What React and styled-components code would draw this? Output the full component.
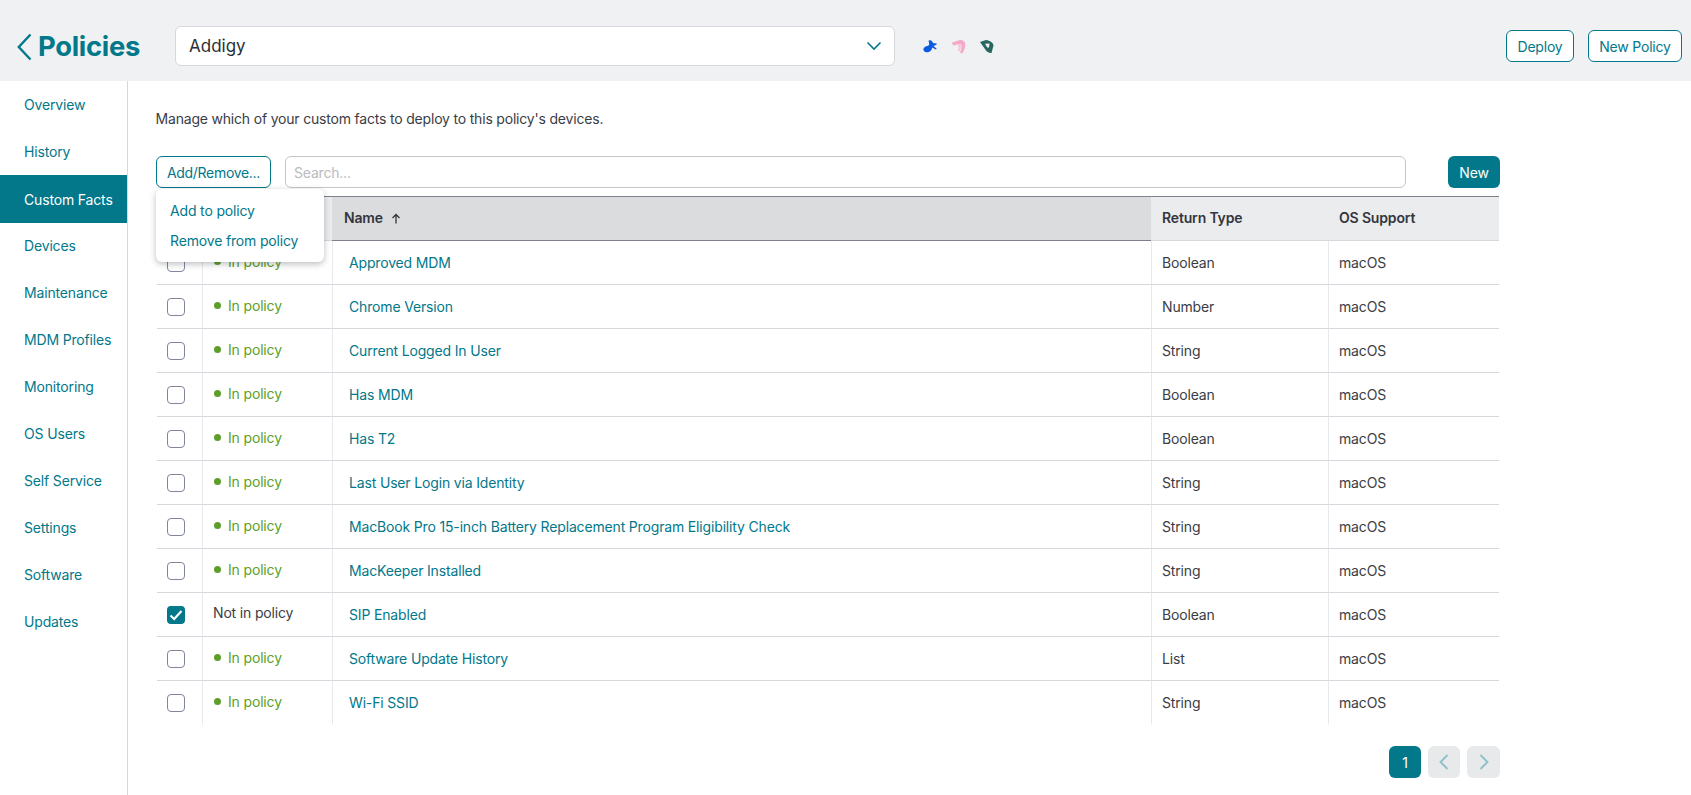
import React from "react";
import styled, { createGlobalStyle } from "styled-components";

const teal = "#02788a";

const Global = createGlobalStyle`
  html, body { margin: 0; padding: 0; background: #fff; }
  body { font-family: Inter, "Liberation Sans", sans-serif; font-size: 14px; letter-spacing: -0.16px; color: #3a3d45; overflow: hidden; }
  * { box-sizing: border-box; }
`;

const Page = styled.div`
  width: 1691px;
  height: 795px;
  position: relative;
  overflow: hidden;
`;

const Header = styled.header`
  height: 81px;
  background: #f0f1f3;
  display: flex;
  align-items: flex-start;
  position: relative;
`;

const BackLink = styled.a`
  position: absolute;
  left: 16px;
  top: 30px;
  display: flex;
  align-items: center;
  color: ${teal};
  font-size: 27.400px;
  line-height: 34px;
  font-weight: 700;
  letter-spacing: -0.3px;
`;

const Title = styled.span`
  position: relative;
  top: -1px;
  margin-left: 5px;
`;

const SelectBox = styled.div`
  position: absolute;
  left: 175px;
  top: 26px;
  width: 720px;
  height: 40px;
  background: #fff;
  border: 1px solid #d5d7dc;
  border-radius: 6px;
  display: flex;
  align-items: center;
  justify-content: space-between;
  padding: 0 12px 0 13px;
  font-size: 17px;
  letter-spacing: 0;
  color: #2c2f36;
`;

const Logos = styled.div`
  position: absolute;
  left: 923px;
  top: 40px;
  display: flex;
  gap: 14.500px;
`;

const HeaderActions = styled.div`
  position: absolute;
  left: 1506px;
  top: 30px;
  display: flex;
  gap: 14px;
`;

const OutlineButton = styled.button`
  height: 32px;
  width: ${(p) => p.$w}px;
  padding: 0;
  background: #fff;
  border: 1px solid ${teal};
  border-radius: 6px;
  color: ${teal};
  font: 400 14px Inter, sans-serif;
  letter-spacing: -0.2px;
`;

const Body = styled.div`
  display: flex;
  height: 714px;
`;

const Sidebar = styled.nav`
  width: 128px;
  height: 100%;
  border-right: 1px solid #d5d7dc;
  flex: none;
`;

const NavItem = styled.div`
  height: ${(p) => (p.$active ? 48 : 47)}px;
  margin-bottom: ${(p) => (p.$active ? -1 : 0)}px;
  padding-left: 24px;
  display: flex;
  align-items: center;
  font-size: 14px;
  color: ${(p) => (p.$active ? "#fff" : teal)};
  background: ${(p) => (p.$active ? teal : "transparent")};
`;

const Main = styled.main`
  position: relative;
  flex: 1;
`;

const Intro = styled.p`
  position: absolute;
  left: 27.500px;
  top: 29px;
  margin: 0;
  line-height: 18px;
  font-size: 14px;
  letter-spacing: -0.19px;
  color: #3a3d45;
`;

const AddButton = styled(OutlineButton)`
  position: absolute;
  left: 28px;
  top: 75px;
  letter-spacing: -0.3px;
`;

const Search = styled.input`
  position: absolute;
  left: 157px;
  top: 75px;
  width: 1121px;
  height: 32px;
  border: 1px solid #c4c6cc;
  border-radius: 6px;
  padding: 0 8px;
  font: 400 14px Inter, sans-serif;
  letter-spacing: -0.2px;
  outline: none;
  &::placeholder { color: #b9bbc1; }
`;

const NewButton = styled.button`
  position: absolute;
  left: 1320px;
  top: 75px;
  width: 52px;
  height: 32px;
  padding: 0;
  background: ${teal};
  border: 0;
  border-radius: 6px;
  color: #fff;
  font: 400 14px Inter, sans-serif;
  letter-spacing: -0.2px;
`;

const Menu = styled.div`
  position: absolute;
  left: 28px;
  top: 108px;
  width: 168px;
  height: 73px;
  background: #fff;
  border-radius: 6px;
  box-shadow: 0 2px 6px rgba(30, 35, 45, 0.3);
  padding: 7px 14px;
  z-index: 2;
`;

const MenuItem = styled.div`
  height: 30px;
  line-height: 30px;
  color: ${teal};
  white-space: nowrap;
`;

const Table = styled.table`
  position: absolute;
  left: 29px;
  top: 115px;
  width: 1342px;
  table-layout: fixed;
  border-collapse: separate;
  border-spacing: 0;
`;

const Th = styled.th`
  height: 45px;
  padding: 0 0 2px ${(p) => p.$pad || 11}px;
  text-align: left;
  font-weight: 600;
  font-size: 14px;
  color: #33363d;
  background: ${(p) => (p.$sorted ? "#dbdcde" : "#ebecee")};
  border-top: 1px solid #7c818d;
  border-bottom: 1px solid ${(p) => (p.$sorted ? "#7c818d" : "#d5d7dc")};
`;

const SortArrow = styled.svg`
  margin-left: 8px;
  vertical-align: -1px;
`;

const Td = styled.td`
  height: 44px;
  padding: 0 0 1px ${(p) => p.$pad || 0}px;
  border-bottom: 1px solid ${(p) => (p.$last ? "transparent" : "#d5d7dc")};
  border-left: ${(p) => (p.$first ? "0" : "1px solid #e8e9ec")};
  font-size: 14px;
  color: #3a3d45;
`;

const NameLink = styled.a`
  color: ${teal};
`;

const Status = styled.span`
  position: relative;
  top: -2px;
  display: inline-flex;
  align-items: center;
  color: ${(p) => (p.$on ? "#5c9f28" : "#3a3d45")};
`;

const Dot = styled.i`
  width: 7px;
  height: 7px;
  border-radius: 50%;
  background: #5c9f28;
  margin: 0 7px 0 1px;
`;

const Check = styled.span`
  display: block;
  margin: 1px 0 0 10px;
  width: 18px;
  height: 18px;
  border-radius: 4px;
  border: ${(p) => (p.$on ? "0" : "1px solid #80859a")};
  background: ${(p) => (p.$on ? teal : "#fff")};
`;

const Pager = styled.div`
  position: absolute;
  left: 1261px;
  top: 665px;
  display: flex;
  gap: 7px;
`;

const PageButton = styled.div`
  width: ${(p) => p.$w || 32}px;
  height: 32px;
  border-radius: 6px;
  display: flex;
  align-items: center;
  justify-content: center;
  background: ${(p) => (p.$active ? teal : "#e8e9eb")};
  color: #fff;
  font-size: 14px;
`;

const nav = ["Overview", "History", "Custom Facts", "Devices", "Maintenance", "MDM Profiles", "Monitoring", "OS Users", "Self Service", "Settings", "Software", "Updates"];

const rows = [
  ["Approved MDM", "Boolean"],
  ["Chrome Version", "Number"],
  ["Current Logged In User", "String"],
  ["Has MDM", "Boolean"],
  ["Has T2", "Boolean"],
  ["Last User Login via Identity", "String"],
  ["MacBook Pro 15-inch Battery Replacement Program Eligibility Check", "String"],
  ["MacKeeper Installed", "String"],
  ["SIP Enabled", "Boolean", true],
  ["Software Update History", "List"],
  ["Wi-Fi SSID", "String"],
];

export default function App() {
  return (
    <Page>
      <Global />
      <Header>
        <BackLink>
          <svg width="17" height="28" viewBox="0 0 17 28" fill="none">
            <path d="M14.500 1.500 2.800 14l11.700 12.500" stroke={teal} strokeWidth="2.400" />
          </svg>
          <Title>Policies</Title>
        </BackLink>
        <SelectBox>
          Addigy
          <svg width="16" height="10" viewBox="0 0 16 10" fill="none">
            <path d="M1.500 1.500 8 8l6.500-6.500" stroke={teal} strokeWidth="1.600" />
          </svg>
        </SelectBox>
        <Logos>
          <svg width="14" height="13" viewBox="0 0 14 13">
            <path d="M6 .3C8-.2 9.500 1 10 3l3.500.4.300 1.200L10.500 6l3.200 2.800-.7.800L9 7.500c0 3-2.500 5-5.500 4.800C1 12 0 10.300.6 8.500c.7-2 3.200-2.200 5.200-3.300C7 4.500 5 1 6 .3Z" fill="#0b5be0" />
          </svg>
          <svg width="14" height="14" viewBox="0 0 14 14">
            <path d="M0 2.500 8 0c3.500-.3 5.500 2 5.300 5-.3 3-1.300 6-2.800 8.300L8 13c.8-2 1.300-4.500 1.400-7 .1-1.700-.7-2.400-1.900-2L1 5.500Z" fill="#f6a9c8" />
            <path d="M5.800 4.500 8.800 4c.2 3-.2 5.500-1.200 7.500L6 10.500c.8-2 .8-4 -.2-6Z" fill="#f9c4da" />
          </svg>
          <svg width="14" height="13" viewBox="0 0 14 13">
            <path fillRule="evenodd" d="M0 2 6 0c4 .5 7.500 3 7.500 5.500L11.500 13c-1.500 0-4-.5-5.500-2.500ZM5 3.800l4.500-.3-.5 4H7.300Z" fill="#27675f" />
          </svg>
        </Logos>
        <HeaderActions>
          <OutlineButton $w={68}>Deploy</OutlineButton>
          <OutlineButton $w={94}>New Policy</OutlineButton>
        </HeaderActions>
      </Header>
      <Body>
        <Sidebar>
          {nav.map((n) => (
            <NavItem key={n} $active={n === "Custom Facts"}>{n}</NavItem>
          ))}
        </Sidebar>
        <Main>
          <Intro>Manage which of your custom facts to deploy to this policy's devices.</Intro>
          <AddButton $w={115}>Add/Remove...</AddButton>
          <Search placeholder="Search..." />
          <NewButton>New</NewButton>
          <Menu>
            <MenuItem>Add to policy</MenuItem>
            <MenuItem>Remove from policy</MenuItem>
          </Menu>
          <Table>
            <colgroup>
              <col style={{ width: 45 }} />
              <col style={{ width: 130 }} />
              <col style={{ width: 819 }} />
              <col style={{ width: 177 }} />
              <col style={{ width: 171 }} />
            </colgroup>
            <thead>
              <tr>
                <Th />
                <Th />
                <Th $sorted $pad={12}>
                  Name
                  <SortArrow width="10" height="11" viewBox="0 0 10 11" fill="none">
                    <path d="M5 10.500V1.500M1.500 5 5 1.500 8.500 5" stroke="#33363d" strokeWidth="1.300" />
                  </SortArrow>
                </Th>
                <Th>Return Type</Th>
                <Th>OS Support</Th>
              </tr>
            </thead>
            <tbody>
              {rows.map(([name, type, off], i) => {
                const last = i === rows.length - 1;
                return (
                  <tr key={name}>
                    <Td $first $last={last}>
                      <Check $on={off}>
                        {off && (
                          <svg width="18" height="18" viewBox="0 0 18 18" fill="none">
                            <path d="M3.500 9.500 7.200 13 14.500 5" stroke="#fff" strokeWidth="2.200" />
                          </svg>
                        )}
                      </Check>
                    </Td>
                    <Td $pad={10} $last={last}>
                      {off ? (
                        <Status>Not in policy</Status>
                      ) : (
                        <Status $on><Dot />In policy</Status>
                      )}
                    </Td>
                    <Td $pad={16} $last={last}><NameLink>{name}</NameLink></Td>
                    <Td $pad={10} $last={last}>{type}</Td>
                    <Td $pad={10} $last={last}>macOS</Td>
                  </tr>
                );
              })}
            </tbody>
          </Table>
          <Pager>
            <PageButton $active>1</PageButton>
            <PageButton>
              <svg width="10" height="16" viewBox="0 0 10 16" fill="none">
                <path d="M8.500 1 1.500 8l7 7" stroke="#8cc0c9" strokeWidth="1.800" />
              </svg>
            </PageButton>
            <PageButton $w={33}>
              <svg width="10" height="16" viewBox="0 0 10 16" fill="none">
                <path d="M1.500 1l7 7-7 7" stroke="#8cc0c9" strokeWidth="1.800" />
              </svg>
            </PageButton>
          </Pager>
        </Main>
      </Body>
    </Page>
  );
}
